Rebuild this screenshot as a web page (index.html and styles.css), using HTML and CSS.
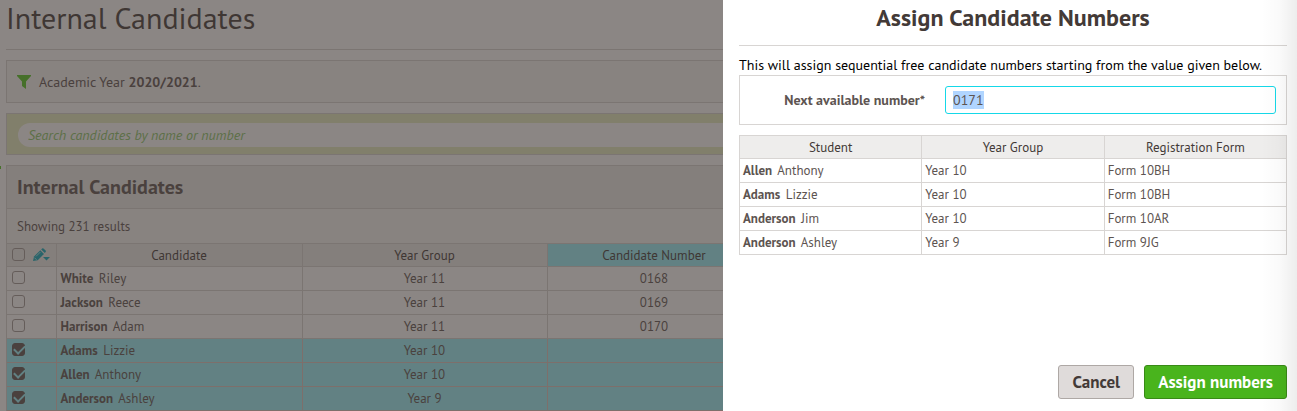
FILE: index.html
```html
<!DOCTYPE html>
<html lang="en">
<head>
    <meta charset="UTF-8">
    <meta name="viewport" content="width=device-width, initial-scale=1.0">
    <title>Internal Candidates</title>
    <link rel="stylesheet" href="styles.css">
</head>
<body>
    <main class="page">
        <h1 class="page-title">Internal Candidates</h1>

        <div class="filter">
            <svg class="filter-icon" width="14" height="14" viewBox="0 0 14 14" aria-hidden="true">
                <path d="M0 0H14V1L9 6.5V14L5 11V6.5L0 1Z" fill="#53c81e"/>
            </svg>
            <p>Academic Year <strong>2020/2021</strong>.</p>
        </div>

        <div class="search">
            <input type="search" class="search-input" placeholder="Search candidates by name or number" aria-label="Search candidates by name or number">
        </div>

        <section class="panel">
            <h2 class="panel-title">Internal Candidates</h2>
            <p class="panel-info">Showing 231 results</p>
            <table class="grid candidates">
                <colgroup>
                    <col class="col-select">
                    <col class="col-name">
                    <col class="col-year">
                    <col class="col-number">
                    <col>
                </colgroup>
                <thead>
                    <tr>
                        <th class="select">
                            <div class="select-tools">
                                <input type="checkbox" aria-label="Select all">
                                <svg width="17" height="14" viewBox="0 0 17 14" aria-hidden="true">
                                    <path d="M0 13L1 8.5L7.3 2.2L11 5.9L4.7 12.2Z" fill="#0cabbd"/>
                                    <path d="M8.2 1.4L9.1 0.5Q9.8 -0.2 10.5 0.5L12.6 2.6Q13.3 3.3 12.6 4L11.8 5Z" fill="#0cabbd"/>
                                    <path d="M3 8.4L7.4 4M1.5 9.7L3.6 11.8" stroke="#d5eff0" stroke-width="0.8"/>
                                    <path d="M10 9H17L13.5 12.5Z" fill="#0cabbd"/>
                                </svg>
                            </div>
                        </th>
                        <th>Candidate</th>
                        <th>Year Group</th>
                        <th class="sorted">Candidate Number</th>
                        <th></th>
                    </tr>
                </thead>
                <tbody>
                    <tr>
                        <td class="select"><input type="checkbox" aria-label="Select"></td>
                        <td class="name"><strong>White</strong> Riley</td><td>Year 11</td><td>0168</td><td></td>
                    </tr>
                    <tr>
                        <td class="select"><input type="checkbox" aria-label="Select"></td>
                        <td class="name"><strong>Jackson</strong> Reece</td><td>Year 11</td><td>0169</td><td></td>
                    </tr>
                    <tr>
                        <td class="select"><input type="checkbox" aria-label="Select"></td>
                        <td class="name"><strong>Harrison</strong> Adam</td><td>Year 11</td><td>0170</td><td></td>
                    </tr>
                    <tr class="selected">
                        <td class="select"><input type="checkbox" aria-label="Select" checked></td>
                        <td class="name"><strong>Adams</strong> Lizzie</td><td>Year 10</td><td></td><td></td>
                    </tr>
                    <tr class="selected">
                        <td class="select"><input type="checkbox" aria-label="Select" checked></td>
                        <td class="name"><strong>Allen</strong> Anthony</td><td>Year 10</td><td></td><td></td>
                    </tr>
                    <tr class="selected">
                        <td class="select"><input type="checkbox" aria-label="Select" checked></td>
                        <td class="name"><strong>Anderson</strong> Ashley</td><td>Year 9</td><td></td><td></td>
                    </tr>
                </tbody>
            </table>
        </section>
    </main>

    <div class="overlay">
        <form class="drawer">
            <h2 class="drawer-title">Assign Candidate Numbers</h2>
            <p class="drawer-intro">This will assign sequential free candidate numbers starting from the value given below.</p>
            <div class="field">
                <label for="nextNumber">Next available number*</label>
                <input type="text" id="nextNumber" name="nextNumber" value="0171" required>
            </div>
            <table class="grid students">
                <thead>
                    <tr><th>Student</th><th>Year Group</th><th>Registration Form</th></tr>
                </thead>
                <tbody>
                    <tr><td class="name"><strong>Allen</strong> Anthony</td><td>Year 10</td><td>Form 10BH</td></tr>
                    <tr><td class="name"><strong>Adams</strong> Lizzie</td><td>Year 10</td><td>Form 10BH</td></tr>
                    <tr><td class="name"><strong>Anderson</strong> Jim</td><td>Year 10</td><td>Form 10AR</td></tr>
                    <tr><td class="name"><strong>Anderson</strong> Ashley</td><td>Year 9</td><td>Form 9JG</td></tr>
                </tbody>
            </table>
            <div class="actions">
                <button type="button" class="btn">Cancel</button>
                <button type="submit" class="btn btn-primary">Assign numbers</button>
            </div>
        </form>
    </div>

    <script>
        const nextNumber = document.getElementById('nextNumber');
        nextNumber.focus();
        nextNumber.select();
    </script>
</body>
</html>
```
FILE: styles.css
```css
* {
    box-sizing: border-box;
}
body {
    margin: 0;
    height: 100vh;
    overflow: hidden;
    font-family: "PT Sans", Lato, sans-serif;
    font-size: 14px;
    line-height: 20px;
    color: #5d5451;
    background: #fff;
}
h1, h2, p {
    margin: 0;
}
input, button {
    font-family: inherit;
}
.page {
    padding: 0 6px;
}
.page-title {
    padding-bottom: 13px;
    margin-bottom: 10px;
    border-bottom: 1px solid #d8d5d3;
    font-size: 30px;
    font-weight: 400;
    line-height: 36px;
    color: #433a37;
}
.filter {
    display: flex;
    align-items: center;
    gap: 8px;
    height: 43px;
    padding: 0 10px;
    margin-bottom: 10px;
    border: 1px solid #d8d5d3;
    background: #f8f7f6;
}
.search {
    padding: 9px 11px 7px;
    margin-bottom: 10px;
    border: 1px solid #d8d5d3;
    background: #e6edc0;
}
.search-input {
    display: block;
    width: 100%;
    height: 24px;
    padding: 0 10px;
    border: 0;
    border-radius: 12px;
    font-size: 14px;
    font-style: italic;
    background: #fff;
}
.search-input::placeholder {
    color: #8cc86a;
}
.panel {
    position: relative;
    border: 1px solid #d8d5d3;
    background: #f8f7f6;
}
/* tip of the collapsed side menu */
.panel::before {
    content: "";
    position: absolute;
    left: -7px;
    width: 1px;
    height: 3px;
    background: #53c81e;
}
.panel-title {
    padding: 0 10px;
    border-bottom: 1px solid #d8d5d3;
    font-size: 20px;
    line-height: 42px;
    background: #eeedec;
}
.panel-info {
    padding: 2px 10px 0;
    font-size: 13px;
    line-height: 32px;
}

/* tables */
.grid {
    width: 100%;
    table-layout: fixed;
    border-collapse: collapse;
    font-size: 13px;
    line-height: 18px;
    background: #fff;
}
.grid th, .grid td {
    height: 24px;
    padding: 0 3px;
    border: 1px solid #d8d5d3;
}
.grid th {
    height: 23px;
    padding-top: 2px;
    font-weight: 400;
    color: #433a37;
    background: #eeedec;
}
.name strong {
    margin-right: 2px;
}
.candidates td {
    text-align: center;
}
.candidates .name {
    padding-left: 4px;
    text-align: left;
}
.candidates th:first-child, .candidates td:first-child {
    border-left: 0;
}
.candidates .select {
    padding: 0 5px;
    text-align: left;
}
.candidates .sorted, .candidates .selected td {
    background: #98f2fc;
}
.candidates .selected td {
    border-color: #dcc5c0;
}
.col-select {
    width: 49px;
}
.col-name {
    width: 246px;
}
.col-year {
    width: 245px;
}
.col-number {
    width: 214px;
}
.select-tools {
    display: flex;
    align-items: center;
    gap: 8px;
}
input[type="checkbox"] {
    appearance: none;
    display: block;
    width: 13px;
    height: 13px;
    margin: 0 0 2px;
    border: 1px solid #a19a97;
    border-radius: 3px;
}
input[type="checkbox"]:checked {
    border-color: #5d5451;
    background: #5d5451;
}
input[type="checkbox"]:checked::before {
    content: "";
    display: block;
    width: 9px;
    height: 5px;
    margin: 2px 1px;
    border: solid #98f2fc;
    border-width: 0 0 2px 2px;
    transform: translateY(-1px) rotate(-45deg);
}

/* drawer */
.overlay {
    position: fixed;
    inset: 0;
    display: flex;
    justify-content: flex-end;
    background: rgba(61, 53, 50, 0.6);
}
.drawer {
    position: relative;
    display: flex;
    flex-direction: column;
    width: 574px;
    max-width: 100%;
    padding: 0 10px 12px 16px;
    background: #fff;
}
.drawer::after {
    content: "";
    position: absolute;
    inset: 0 0 0 auto;
    width: 36px;
    background: linear-gradient(to right, rgba(0, 0, 0, 0), rgba(0, 0, 0, 0.02) 50%, rgba(0, 0, 0, 0.07));
    pointer-events: none;
}
.drawer-title {
    padding-bottom: 9px;
    border-bottom: 1px solid #d8d5d3;
    margin-bottom: 9px;
    font-size: 24px;
    line-height: 36px;
    text-align: center;
    color: #433a37;
}
.drawer-intro {
    color: #000;
}
.field {
    display: flex;
    align-items: center;
    gap: 20px;
    padding: 10px;
    margin-bottom: 10px;
    border: 1px solid #d8d5d3;
}
.field label {
    flex: 1;
    font-weight: 700;
    text-align: right;
}
.field input {
    width: 331px;
    height: 28px;
    padding: 0 7px;
    border: 1px solid #15d8e8;
    border-radius: 3px;
    outline: 0;
    font-size: 14px;
    color: #5d5451;
}
.field input::selection {
    color: #5d5451;
    background: #b0d5ff;
}
.actions {
    display: flex;
    justify-content: flex-end;
    gap: 10px;
    margin-top: auto;
}
.btn {
    height: 34px;
    padding: 0 13px;
    border: 1px solid #aea8a5;
    border-radius: 3px;
    font-size: 17px;
    font-weight: 700;
    color: #433a37;
    background: #dfdbda;
}
.btn-primary {
    border-color: #398a17;
    color: #fff;
    background: #49b41d;
}
```
